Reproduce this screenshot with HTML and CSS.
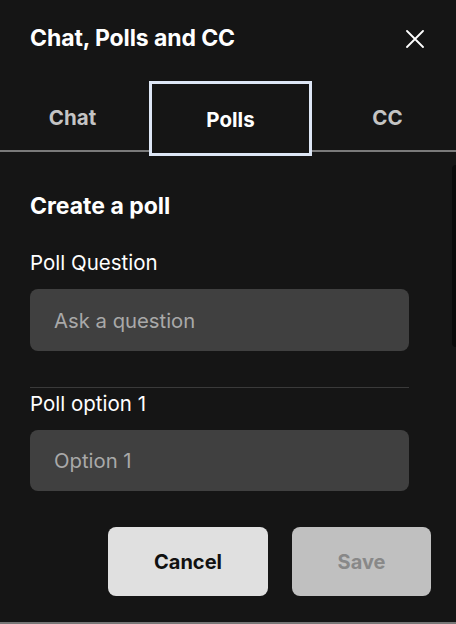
FILE: index.html
```html
<!DOCTYPE html>
<html>
<head>
<meta charset="utf-8">
<link rel="stylesheet" href="styles.css">
</head>
<body>
<div class="panel">
  <div class="header">
    <h1 class="title">Chat, Polls and CC</h1>
    <button class="close" aria-label="Close">
      <svg width="18" height="18" viewBox="0 0 18 18"><path d="M1 1 L17 17 M17 1 L1 17" stroke="#fff" stroke-width="1.8" fill="none" stroke-linecap="round"/></svg>
    </button>
  </div>
  <div class="tabs">
    <div class="tab tab-chat">Chat</div>
    <div class="tab tab-active">Polls</div>
    <div class="tab tab-cc">CC</div>
  </div>
  <div class="content">
    <h2 class="section-title">Create a poll</h2>
    <label class="field-label">Poll Question</label>
    <input class="field" type="text" placeholder="Ask a question">
    <hr class="divider">
    <label class="field-label option-label">Poll option 1</label>
    <input class="field" type="text" placeholder="Option 1">
    <div class="actions">
      <button class="btn btn-cancel">Cancel</button>
      <button class="btn btn-save">Save</button>
    </div>
  </div>
  <div class="scroll-thumb"></div>
</div>
</body>
</html>
```
FILE: styles.css
```css
* { box-sizing: border-box; }
html, body {
  margin: 0;
  padding: 0;
  background: #151515;
}
body {
  font-family: "Inter", "Liberation Sans", sans-serif;
  color: #fff;
}
.panel {
  position: relative;
  height: 624px;
  overflow: hidden;
  border-bottom: 2px solid #777;
  display: flex;
  flex-direction: column;
}
.header {
  display: flex;
  justify-content: space-between;
  align-items: flex-start;
  padding: 24px 32px 0 30px;
  height: 81px;
}
.title {
  margin: 0;
  font-size: 23px;
  font-weight: 700;
  line-height: 28px;
  letter-spacing: -0.1px;
}
.close {
  background: none;
  border: 0;
  padding: 0;
  margin-top: 6px;
  width: 18px;
  height: 18px;
  display: flex;
}
.tabs {
  display: flex;
  height: 71px;
  border-bottom: 2px solid #7a7a7a;
  align-items: stretch;
}
.tab {
  flex: none;
  display: flex;
  align-items: center;
  justify-content: center;
  font-size: 20.5px;
  font-weight: 700;
  color: #c4c4c4;
  padding-top: 4px;
}
.tab-chat { width: 145px; margin-right: 4px; }
.tab-active {
  width: 163px;
  height: 75px;
  margin-bottom: -6px;
  border: 3px solid #dde6f5;
  background: #151515;
  color: #fff;
  padding-top: 1px;
}
.tab-cc { width: 151px; }
.content {
  padding: 40px 47px 0 30px;
  display: flex;
  flex-direction: column;
}
.section-title {
  margin: 0;
  font-size: 23px;
  font-weight: 700;
  line-height: 28px;
}
.field-label {
  font-size: 20.5px;
  line-height: 24px;
  margin-top: 31px;
  color: #fff;
}
.option-label { margin-top: 4px; }
.field {
  margin-top: 14px;
  height: 62px;
  width: 379px;
  border: 0;
  border-radius: 8px;
  background: #404040;
  padding: 0 24px;
  font-family: "Inter", "Liberation Sans", sans-serif;
  font-size: 20.3px;
  color: #fff;
  outline: none;
}
.option-label + .field { height: 61px; }
.field::placeholder { color: #a9a9a9; }
.divider {
  margin: 36px 0 0;
  width: 379px;
  border: 0;
  border-top: 1px solid #3a3a3a;
  height: 0;
}
.actions {
  display: flex;
  justify-content: flex-end;
  gap: 24px;
  margin-top: 36px;
  margin-right: -22px;
}
.btn {
  height: 69px;
  border: 0;
  border-radius: 8px;
  font-family: "Inter", "Liberation Sans", sans-serif;
  font-size: 20px;
  font-weight: 700;
}
.btn-cancel {
  width: 160px;
  background: #e0e0e0;
  color: #111;
}
.btn-save {
  width: 139px;
  background: #c0c0c0;
  color: #888;
}
.scroll-thumb {
  position: absolute;
  left: 452px;
  top: 165px;
  width: 10px;
  height: 182px;
  border-radius: 4px;
  background: #0a0a0a;
}
```
